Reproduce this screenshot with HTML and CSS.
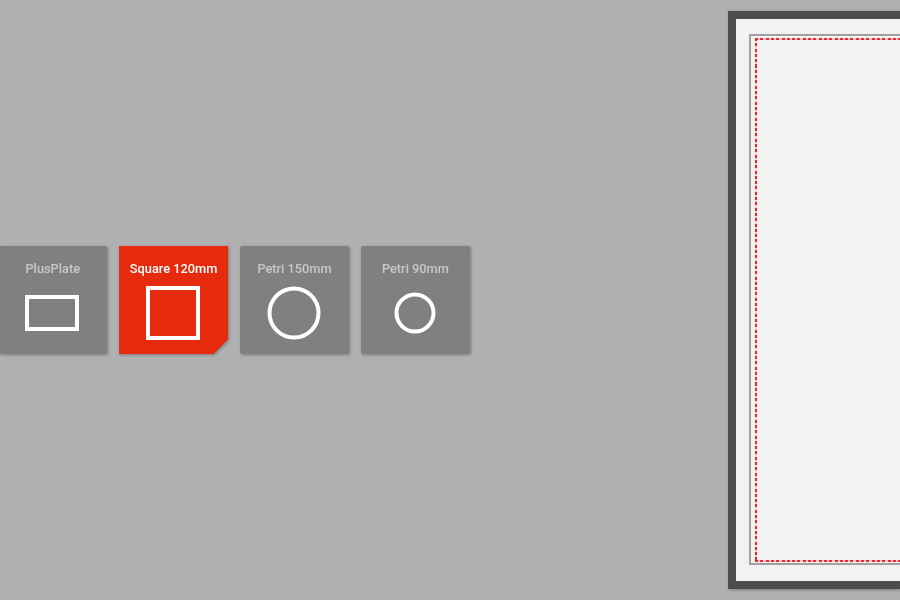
FILE: index.html
```html
<!DOCTYPE html>
<html lang="en">
<head>
    <meta charset="UTF-8">
    <meta name="viewport" content="width=device-width, initial-scale=1.0">
    <title>Plate Selection</title>
    <link rel="stylesheet" href="styles.css">
</head>
<body>
    <div class="plate-list">
        <div class="plate-card">
            <span class="plate-name">PlusPlate</span>
            <svg class="plate-icon" viewBox="0 0 54 54"><rect x="2" y="11" width="50" height="32" fill="none" stroke="#fff" stroke-width="4"/></svg>
        </div>
        <div class="plate-card selected">
            <span class="plate-name">Square 120mm</span>
            <svg class="plate-icon" viewBox="0 0 54 54"><rect x="2" y="2" width="50" height="50" fill="none" stroke="#fff" stroke-width="4"/></svg>
        </div>
        <div class="plate-card">
            <span class="plate-name">Petri 150mm</span>
            <svg class="plate-icon" viewBox="0 0 54 54"><circle cx="27" cy="27" r="24.5" fill="none" stroke="#fff" stroke-width="4"/></svg>
        </div>
        <div class="plate-card">
            <span class="plate-name">Petri 90mm</span>
            <svg class="plate-icon" viewBox="0 0 54 54"><circle cx="27" cy="27" r="18.5" fill="none" stroke="#fff" stroke-width="4"/></svg>
        </div>
    </div>

    <div class="plate-preview">
        <div class="preview-edge">
            <div class="preview-safe"></div>
        </div>
    </div>
</body>
</html>
```

FILE: styles.css
```css
body {
    font-family: Roboto, Arial, sans-serif;
    background-color: #b0b0b0;
    margin: 0;
    overflow: hidden;
    display: flex;
    width: 900px;
    height: 600px;
}

.plate-list {
    display: flex;
    gap: 12.4px;
    margin: 246px 0 0 -1.5px;
    height: 108px;
    flex: none;
}

.plate-card {
    width: 108.5px;
    height: 108px;
    box-sizing: border-box;
    padding-top: 15px;
    display: flex;
    flex-direction: column;
    align-items: center;
    background-color: #808080;
    border-radius: 2px;
    filter: drop-shadow(1px 1px 1.5px rgba(0, 0, 0, 0.3));
}

.plate-card.selected {
    background: linear-gradient(135deg, #e52a0e calc(100% - 10px), transparent 0);
    border-radius: 0;
}

.plate-name {
    font-size: 12.8px;
    font-weight: 500;
    line-height: 15px;
    color: #c8c8c8;
    white-space: nowrap;
}

.selected .plate-name {
    color: #fff;
}

.plate-icon {
    width: 54px;
    height: 54px;
    margin: 9.5px 1px 0 0;
}

.plate-preview {
    flex: 1;
    margin: 11px 0 11px 258.3px;
    box-sizing: border-box;
    border: 8px solid #4d4d4d;
    border-right: none;
    background-color: #f2f2f2;
    padding: 15px 0 16px 13px;
    box-shadow: 1px 1px 3px rgba(0, 0, 0, 0.3);
}

.preview-edge {
    height: 100%;
    box-sizing: border-box;
    border: 2px solid #a0a0a0;
    border-right: none;
    padding: 2px 0 1px 4px;
}

.preview-safe {
    height: 100%;
    background:
        repeating-linear-gradient(90deg, #f5222d 0 3px, #f6d0d0 3px 5.3px) top left / 100% 2px no-repeat,
        repeating-linear-gradient(90deg, #f5222d 0 3px, #f6d0d0 3px 5.3px) bottom left / 100% 2px no-repeat,
        repeating-linear-gradient(180deg, #f5222d 0 3px, #f6d0d0 3px 5.3px) top left / 2px 100% no-repeat;
}
```
